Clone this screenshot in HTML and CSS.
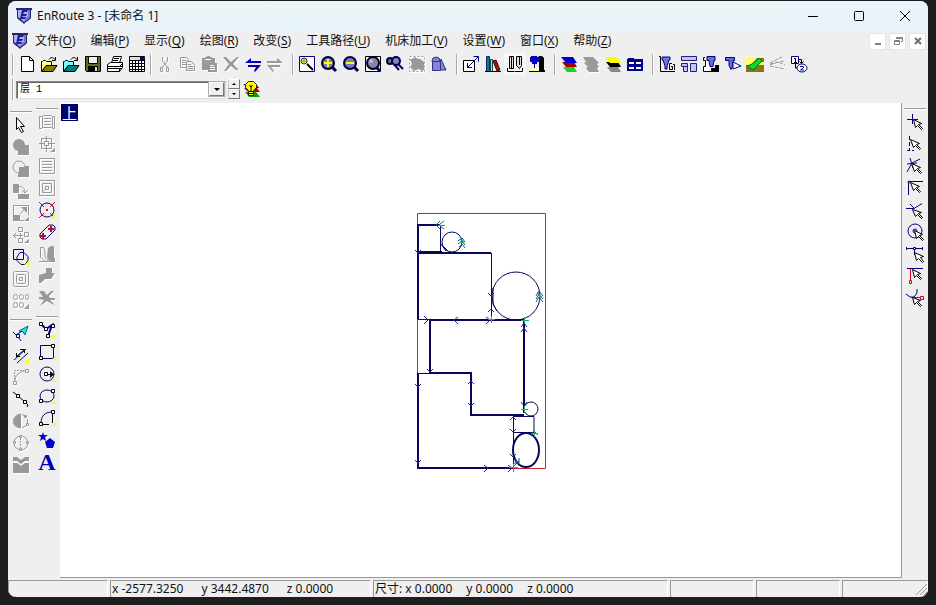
FILE: index.html
```html
<!DOCTYPE html>
<html lang="zh-CN">
<head>
<meta charset="utf-8">
<title>EnRoute 3 - [未命名 1]</title>
<link rel="stylesheet" href="styles.css">
</head>
<body>
<div class="window">
<header class="titlebar">
  <svg class="logo" viewBox="0 0 18 18"><path d="M1 1h16v2h-1v8l-2 2-3 2-2 2-2-2-3-2-2-2V3H1z" fill="#26266c"/><path d="M3 3h11v8l-3 2-2 2-2-2-4-3z" fill="#a9b0fa"/><path d="M13 3h2v7l-3 3-3 2 1-3 3-3z" fill="#7178d8"/><path d="M7 3h6l-1 2H9L8 7h4l-1 2H8l-1 1h4l-1 2H5z" fill="#1c1c98"/></svg>
  <h1>EnRoute 3 - [未命名 1]</h1>
  <div class="wincontrols">
    <button aria-label="最小化"><svg viewBox="0 0 12 12"><path class="k" d="M1 6.500h10"/></svg></button>
    <button aria-label="最大化"><svg viewBox="0 0 12 12"><rect class="k" x="1.500" y="1.500" width="9" height="9" rx="1"/></svg></button>
    <button aria-label="关闭"><svg viewBox="0 0 12 12"><path class="k" d="M1 1l10 10M11 1L1 11"/></svg></button>
  </div>
</header>
<nav class="menubar">
  <svg class="logo" viewBox="0 0 18 18"><path d="M1 1h16v2h-1v8l-2 2-3 2-2 2-2-2-3-2-2-2V3H1z" fill="#26266c"/><path d="M3 3h11v8l-3 2-2 2-2-2-4-3z" fill="#a9b0fa"/><path d="M13 3h2v7l-3 3-3 2 1-3 3-3z" fill="#7178d8"/><path d="M7 3h6l-1 2H9L8 7h4l-1 2H8l-1 1h4l-1 2H5z" fill="#1c1c98"/></svg>
  <div class="menus">
    <button>文件(<u>O</u>)</button><button>编辑(<u>P</u>)</button><button>显示(<u>Q</u>)</button><button>绘图(<u>R</u>)</button><button>改变(<u>S</u>)</button><button>工具路径(<u>U</u>)</button><button>机床加工(<u>V</u>)</button><button>设置(<u>W</u>)</button><button>窗口(<u>X</u>)</button><button>帮助(<u>Z</u>)</button>
  </div>
  <div class="mdi">
    <button aria-label="最小化文档"><svg viewBox="0 0 12 12"><path d="M3 8h6v2H3z" fill="#788490"/></svg></button>
    <button aria-label="还原文档"><svg viewBox="0 0 12 12"><path d="M4.500 4V2.500h6v4H9M4 3.500h6M2.500 5.500h5v4h-5zM2 6.500h6" fill="none" stroke="#788490"/></svg></button>
    <button aria-label="关闭文档"><svg viewBox="0 0 12 12"><path d="M3 3l6 6M9 3L3 9" stroke="#66727e" stroke-width="2"/></svg></button>
  </div>
</nav>
<div class="toolbar">
  <div class="group">
    <button aria-label="新建"><svg viewBox="0 0 18 18"><path class="k" fill="#fff" d="M3.500 1.500h8l4 4v11h-12zM11.500 1.500v4h4"/></svg></button>
    <button aria-label="打开"><svg viewBox="0 0 18 18"><path fill="#ffff8c" stroke="#000" d="M1.500 16.500v-10h1l1-1h2l1 1h5v4h-5z"/><path class="k" d="M9 4.500c2-3 4-2 6 0M15.500 2v3.500H12"/><path fill="#808000" stroke="#000" d="M2 16.500l4-6h11l-4 6z"/></svg></button>
    <button aria-label="导入"><svg viewBox="0 0 18 18"><path fill="#70ffff" stroke="#000" d="M1.500 16.500v-10h1l1-1h2l1 1h5v4h-5z"/><path class="k" d="M9 4.500c2-3 4-2 6 0M15.500 2v3.500H12"/><path fill="#008080" stroke="#000" d="M2 16.500l4-6h11l-4 6z"/></svg></button>
    <button aria-label="保存"><svg viewBox="0 0 18 18"><path fill="#686820" stroke="#000" d="M1.500 1.500h15v15h-14l-1-1z"/><path fill="#eee" stroke="#000" d="M4.500 1.500h9v7h-9z"/><path d="M4 11h10v6H4z"/><path fill="#ddd" d="M11 12h2v4h-2z"/></svg></button>
    <button aria-label="打印"><svg viewBox="0 0 18 18"><path fill="#fff" stroke="#000" d="M5.500 8l2-6.500h8L13.500 8M1.500 9.500l3-2h12v5l-3 4h-12z"/><path class="k" d="M8 3.500h5M7 5.500h5M1.500 11.500h12l3-3M1.500 13.500h12v3M14 11.500h3M14 13.500h2"/><path fill="#ff0" d="M8 12h3v1H8z"/></svg></button>
    <button aria-label="表格"><svg viewBox="0 0 18 18"><path fill="#fff" stroke="#000" d="M1.500 1.500h15v15h-15z"/><path class="k" d="M2 5.500h15M2 8.500h15M2 11.500h15M2 14.500h15M4.500 5v12M7.500 5v12M10.500 5v12M13.500 5v12"/><path fill="#000080" d="M12 2h5v3h-5z"/><path fill="#ddd" d="M2 2h10v3H2z"/></svg></button>
  </div>
  <div class="group near">
    <button disabled aria-label="剪切"><svg viewBox="0 0 18 18"><path class="g" d="M6.500 2v4l5 6M11.500 2v4l-5 6M4.500 12.500h2v4h-2zM10.500 12.500h2v4h-2z"/></svg></button>
    <button disabled aria-label="复制"><svg viewBox="0 0 18 18"><path class="g" d="M2.500 2.500h6l2 2v8h-8zM4 5.500h4M4 7.500h4M4 9.500h4"/><path class="g" fill="#efefef" d="M8.500 6.500h5l3 3v6h-8zM10 9.500h3M10 11.500h5M10 13.500h5"/></svg></button>
    <button disabled aria-label="粘贴"><svg viewBox="0 0 18 18"><path fill="#999" d="M2 3h3V2h2V1h3v1h2v1h3v5h2v9H8v-2H2z"/><path class="w" d="M5 4.500h6M10 10.500h4M10 12.500h5M10 14.500h5"/></svg></button>
    <button disabled aria-label="删除"><svg viewBox="0 0 18 18"><path fill="#999" d="M1 2h3l5 5 6-5h2l-6 7 5 5v1h-2l-5-4-5 5H2l5-7z"/></svg></button>
    <button aria-label="撤销"><svg viewBox="0 0 18 18"><path fill="#0000b8" d="M1 8l6-5v3h10v2zM17 10H4v2h8l-2 4 1 1z"/></svg></button>
    <button disabled aria-label="重做"><svg viewBox="0 0 18 18"><path fill="#999" d="M17 8l-6-5v3H1v2zM1 10h13v2H5l3 4-1 1z"/></svg></button>
  </div>
  <div class="group">
    <button aria-label="窗口缩放"><svg viewBox="0 0 18 18"><path class="n" fill="#fff" d="M1.500 1.500h15v15h-15z"/><circle cx="6" cy="6" r="3" fill="#ff0" stroke="#333"/><path stroke="#888" d="M6 4v4M4 6h4"/><path stroke="#000" stroke-width="2" d="M9 9l6 6"/></svg></button>
    <button aria-label="放大"><svg viewBox="0 0 18 18"><path stroke="#000050" stroke-width="3" d="M11 11l5 5"/><circle cx="8" cy="8" r="6" fill="#777bb8" stroke="#000030" stroke-width="2"/><path stroke="#ff0" stroke-width="2" d="M4 8h8M8 4v8"/></svg></button>
    <button aria-label="缩小"><svg viewBox="0 0 18 18"><path stroke="#000050" stroke-width="3" d="M11 11l5 5"/><circle cx="8" cy="8" r="6" fill="#777bb8" stroke="#000050" stroke-width="2"/><path stroke="#ff0" stroke-width="2" d="M4 8h8"/></svg></button>
    <button aria-label="全部显示"><svg viewBox="0 0 18 18"><path fill="#fff" stroke="#000" d="M1.500 1.500h15v15h-15z"/><path stroke="#000060" stroke-width="3" d="M12 12l4 4"/><circle cx="9" cy="8" r="6" fill="#8588a0" stroke="#000030" stroke-width="2"/><circle cx="7" cy="6" r="2" fill="#bbc"/></svg></button>
    <button aria-label="查找"><svg viewBox="0 0 18 18"><path stroke="#000050" stroke-width="2" d="M7 8l6 7M12 9l5 5"/><circle cx="4" cy="6" r="3" fill="#777" stroke="#000040" stroke-width="2"/><circle cx="10" cy="6" r="4" fill="#8888a8" stroke="#000060" stroke-width="2"/></svg></button>
    <button disabled aria-label="选择缩放"><svg viewBox="0 0 18 18"><path class="w" d="M1.500 1.500h15v15h-15z"/><path fill="#999" d="M2 4h2l3-2 3 2h2l4 3v8l-2 1-3-2-5 2-4-4 2-3z"/><path class="g" stroke-dasharray="2 2" d="M1.500 1.500h15v15h-15z"/></svg></button>
    <button aria-label="图形"><svg viewBox="0 0 18 18"><g fill="#8286ca" stroke="#303090"><path d="M11 4l5 11H7z"/><circle cx="6" cy="6" r="4"/><path d="M2.500 6.500h8v9h-8z"/></g></svg></button>
  </div>
  <div class="group">
    <button aria-label="比例"><svg viewBox="0 0 18 18"><path fill="#fff" stroke="#000" d="M1.500 5.500h11v11h-11z"/><path class="n" d="M5 13l11-11M11.500 1.500h5v5M5.500 8v4.500H10"/></svg></button>
    <button aria-label="刀具库"><svg viewBox="0 0 18 18"><path fill="#286c8b" stroke="#003060" d="M2.500 1.500h3v15h-3z"/><path fill="#a4d6cc" stroke="#175050" d="M6.500 4.500h2v12h-2z"/><path fill="#9a1515" stroke="#500" d="M9 6l3-1 4 10-3 1z"/><path class="k" d="M1 16.500h16"/></svg></button>
    <button class="pressed" aria-label="刀具"><svg viewBox="0 0 18 18"><path fill="#ddd" stroke="#000" d="M3.500 1.500h4v12h-4zM10.500 1.500h5v9l-2 3-3-3z"/><path class="k" d="M1.500 13v3.500h7M9 16.500h7.500V13M5.500 2v11M13.500 2v8"/></svg></button>
    <button aria-label="机床"><svg viewBox="0 0 18 18"><path fill="#ffffae" d="M1 12h14v5H1z"/><path fill="#000" d="M9 3l2-2h3l2 2v12h1v2h-6V6H9z"/><path fill="#0000c0" d="M3 1h6v1h3v5H9v2H7v4H6V9H4V7H2V2h1z"/><path class="k" d="M1 16.500h16"/></svg></button>
  </div>
  <div class="group">
    <button aria-label="图层"><svg viewBox="0 0 18 18"><path fill="#20d020" d="M3 12h11l3 5H7z"/><path fill="#a00000" d="M2 7h12l3 5H6z"/><path fill="#0000d0" d="M1 2h12l4 6H6z"/></svg></button>
    <button disabled aria-label="隐藏图层"><svg viewBox="0 0 18 18"><path fill="#999" d="M1 2h10l4 4 2 2-2 1 2 3-2 1 2 4H7l-3-4 2-1-4-4 2-1z"/></svg></button>
    <button aria-label="当前图层"><svg viewBox="0 0 18 18"><path fill="#888" d="M3 12h11l3 5H7z"/><path d="M2 7h12l3 5H6z"/><path fill="#ff0" d="M1 2h12l4 6H6z"/></svg></button>
    <button aria-label="图层管理"><svg viewBox="0 0 18 18"><path fill="#000090" d="M1 4h1V3h6v1h9v12H1z"/><path stroke="#fff" stroke-width="2" d="M3 8h5M10 8h5M3 13h5M10 13h5"/></svg></button>
  </div>
  <div class="group">
    <button aria-label="输出代码"><svg viewBox="0 0 18 18"><path class="k" d="M1 1.500h1.500v15H17"/><path fill="#7078d0" stroke="#000090" d="M4 2h8v3h-1l-2 6v3H7v-3L5 5H4z"/><path class="k" d="M14 8.500h-2.500v6h3v-3H13M15 9.500h1.500V15"/></svg></button>
    <button aria-label="排版"><svg viewBox="0 0 18 18"><path fill="#c1c4ee" stroke="#202080" d="M1.500 1.500h15v4h-15zM1.500 8.500h6v3h-6zM10.500 8.500h6v8h-6zM3.500 11.500h4v5h-4z"/></svg></button>
    <button aria-label="加工"><svg viewBox="0 0 18 18"><path class="k" fill="#fff" d="M3 2.500H1.500v3h2v6h-2v5H10"/><path fill="#6870d0" stroke="#000080" d="M5 1.500h8v4h-1l-1 6H8l-1-6H5z"/><path d="M9 13h4v-3h4v7H9z"/></svg></button>
    <button aria-label="仿真"><svg viewBox="0 0 18 18"><path fill="#646cd0" stroke="#000080" d="M1.500 2.500h9v3H9v5l-2 4-2-4v-5H1.500z"/><path class="n" fill="#fff" d="M9 7l8 4-8 3z"/></svg></button>
    <button aria-label="材料"><svg viewBox="0 0 18 18"><path fill="#827814" d="M0 3h18v14H0z"/><path fill="#ffff68" d="M0 3h11L5 10H0zM13 7h5v3h-7z"/><path fill="#00dc30" stroke="#067016" d="M1 11l5-2 7-6 3 3-9 9z"/></svg></button>
    <button disabled aria-label="路径"><svg viewBox="0 0 18 18"><path class="g" stroke-dasharray="4 1" d="M2 8L14 2M2 9l15-3M2 10l8-3 7 3M2 11l14 3"/></svg></button>
    <button aria-label="顺序"><svg viewBox="0 0 18 18"><path class="n" fill="#fff" d="M1.500 1.500h7v7h-7z"/><ellipse cx="12" cy="13" rx="5" ry="4" class="n" fill="#fff"/><path class="k" d="M4 3.500h1.500v4M4 7.500h3M9 4.500h2.500v4M5.500 9v4H7M9.500 6.500l2 2 2-2"/><path class="n" d="M10 11.500h3.500v1l-3 2.500H14"/></svg></button>
  </div>
</div>
<div class="layerbar">
  <div class="combo">
    <select aria-label="图层"><option>层 1</option></select>
  </div>
  <div class="spin"><button aria-label="上一层"><i class="up"></i></button><button aria-label="下一层"><i class="down"></i></button></div>
  <button class="tool" aria-label="图层可见"><svg viewBox="0 0 18 18"><path fill="#00a500" d="M3 12h11l4 5H7z"/><path fill="#c00000" d="M2 8h13l3 4H6z"/><path fill="#0000a0" d="M1 4h13l3 4H6z"/><path fill="#ff0" stroke="#222" d="M6.500 1.500h5l3 3v3l-3 3v5h-5v-5l-3-3v-3z"/><path class="k" d="M7 11.500h4M7 13.500h4M9 11V7L7.500 5M9 7l1.500-2"/></svg></button>
</div>
<main class="work">
  <aside class="palettes">
    <div class="palette first">
      <div class="set">
        <button aria-label="选择"><svg viewBox="0 0 18 18"><path class="k" fill="#fff" d="M4.500 1.500l8 9h-4l3 5-2 1-3-5-2 2z"/></svg></button>
        <button disabled aria-label="合并"><svg viewBox="0 0 18 18"><circle cx="7" cy="7" r="6" fill="#999"/><path fill="#999" d="M6 7h11v10H6z"/></svg></button>
        <button disabled aria-label="相减"><svg viewBox="0 0 18 18"><path fill="#999" d="M6 6h11v11H6z"/><circle cx="7" cy="7" r="6" fill="#efefef" stroke="#999"/><path fill="#999" d="M7 7h9v9H7z"/></svg></button>
        <button disabled aria-label="旋转"><svg viewBox="0 0 18 18"><path fill="#999" d="M1 2h6v9H1zM6 12h11v5H6z"/><path class="g" d="M7 4.500c4 0 6 2 6 6M10 8l3 3 3-3"/></svg></button>
        <button disabled aria-label="缩放"><svg viewBox="0 0 18 18"><path class="g" d="M1.500 11V1.500h15v10M8 16.500h4M8 10l6-6"/><path fill="#999" d="M1 11h7v6H1zM9 3h6v6zM17 13v4h-5z"/></svg></button>
        <button disabled aria-label="移动"><svg viewBox="0 0 18 18"><path class="g" d="M6.500 1.500h4v4h-4zM12.500 6.500h4v4h-4zM6.500 12.500h4v4h-4zM1 9.500h10M4 7L1.500 9.500 4 12M8.500 7v5"/><path fill="#999" d="M17 13v4h-5z"/></svg></button>
        <button aria-label="组合"><svg viewBox="0 0 18 18"><path class="n" d="M1.500 1.500h10v10h-10z"/><path class="n" d="M8 4.500h4l4 4v4l-3 4H9l-4-4V9z"/><path fill="#ff0" d="M17 13v4h-5z"/></svg></button>
        <button disabled aria-label="偏移"><svg viewBox="0 0 18 18"><rect class="g" x="1.500" y="1.500" width="15" height="15" rx="2"/><rect class="g" x="4.500" y="4.500" width="9" height="9" rx="1"/><path class="g" d="M7.500 7.500h3v3h-3z"/></svg></button>
        <button disabled aria-label="阵列"><svg viewBox="0 0 18 18"><rect class="g" x="1.500" y="2.500" width="4" height="5" rx="2"/><rect class="g" x="7.500" y="2.500" width="4" height="5" rx="2"/><rect class="g" x="13.500" y="2.500" width="3" height="5" rx="2"/><rect class="g" x="1.500" y="10.500" width="4" height="5" rx="2"/><rect class="g" x="7.500" y="10.500" width="4" height="5" rx="2"/><path fill="#999" d="M17 12v5h-5z"/></svg></button>
      </div>
      <div class="set">
        <button aria-label="点编辑"><svg viewBox="0 0 18 18"><path fill="#18e4e4" stroke="#087070" d="M7 7l9-5-3 9-2-3z"/><path class="n" d="M1 8l3 3 6-4M7 14l2 3M4.500 10.500h3v3h-3z"/></svg></button>
        <button aria-label="测量"><svg viewBox="0 0 18 18"><path class="n" d="M2 14L14 3M5 17L16 7"/><path class="k" d="M4 11l8-7M4.500 7v3.500H8M8 3.500h4.500V7"/><path fill="#ff0" d="M17 12v5h-5z"/></svg></button>
        <button disabled aria-label="倒圆"><svg viewBox="0 0 18 18"><path class="g" d="M1.500 13.500h3v3h-3zM13.500 1.500h3v3h-3zM3 13c0-6 4-9 10-10"/><path class="g" stroke-dasharray="2 1" d="M2.500 12V2.500H12"/></svg></button>
        <button aria-label="节点"><svg viewBox="0 0 18 18"><path class="n" d="M7 7l5 4"/><path class="k" d="M1 2l4 3M14 13l2 2-1 2"/><path class="k" fill="#fff" d="M4.500 4.500h3v3h-3zM11.500 10.500h3v3h-3z"/></svg></button>
        <button disabled aria-label="镜像"><svg viewBox="0 0 18 18"><path class="g" fill="#999" d="M8.500 2v14C-1 15-1 4 8.500 2z"/><path class="g" d="M10 2.500l4 2M10 16l5-3M15.500 7v5M12.500 3.500h2v2h-2zM14.500 11.500h2v2h-2z"/></svg></button>
        <button disabled aria-label="对称"><svg viewBox="0 0 18 18"><circle class="g" cx="9" cy="9" r="7"/><path class="g" d="M8.500 1v16" stroke-dasharray="2 1"/><path class="g" fill="#eee" d="M7.500 1.500h2v2h-2zM1.500 7.500h2v2h-2zM14.500 7.500h2v2h-2zM7.500 14.500h2v2h-2z"/></svg></button>
        <button disabled aria-label="桥接"><svg viewBox="0 0 18 18"><path fill="#999" d="M1 1h4l4 3 4-3h4v4h-4l-4 3-4-3H1zM1 7h4l4 3 4-3h4v10H1z"/></svg></button>
      </div>
    </div>
    <div class="palette">
      <div class="set">
        <button disabled aria-label="变形"><svg viewBox="0 0 18 18"><path class="g" d="M1.500 3.500h3l1-1h8l1 1h2v12h-2l-1-1h-9l-1 1h-2zM4.500 4v11M14.500 4v11M6 5.500h7M6 8.500h7M6 11.500h7"/></svg></button>
        <button disabled aria-label="对齐"><svg viewBox="0 0 18 18"><path class="g" d="M3.500 3.500h10v10h-10zM6.500 6.500h4v4h-4zM8.500 1v5M8.500 11v6M1 8.500h5M11 8.500h6"/><path fill="#999" d="M17 13v4h-5z"/></svg></button>
        <button disabled aria-label="填充"><svg viewBox="0 0 18 18"><path class="g" d="M1.500 1.500h15v15h-15zM4 4.500h10M4 7.500h10M4 10.500h10M4 13.500h10"/></svg></button>
        <button disabled aria-label="岛屿填充"><svg viewBox="0 0 18 18"><path class="g" d="M1.500 1.500h15v15h-15zM4.500 4.500h9v9h-9zM7.500 7.500h3v3h-3zM5 12.500l3-3"/></svg></button>
        <button aria-label="钻孔"><svg viewBox="0 0 18 18"><circle class="n" cx="9" cy="9" r="7"/><path stroke="#e00030" d="M1 1l5 5M17 1l-5 5M1 17l5-5M17 17l-5-5"/><path fill="#f00" d="M8 8h2v2H8z"/><path fill="#ff0" d="M17 13v4h-5z"/></svg></button>
        <button aria-label="槽孔"><svg viewBox="0 0 18 18"><path class="n" d="M2 11l9-9h4l2 2v3L8 16H4l-2-2z"/><path stroke="#d00030" stroke-width="2" d="M2 13h6M5 10v6M10 6h6M13 3v6"/></svg></button>
        <button disabled aria-label="雕刻"><svg viewBox="0 0 18 18"><path class="g" d="M2 2.500h3.500L7 6v6l3 4M2.500 3v9l4 4M1 16.500h16"/><path fill="#999" d="M10 3l3-2h3v12h1v3h-6l-2-4z"/></svg></button>
        <button disabled aria-label="斜面"><svg viewBox="0 0 18 18"><path fill="#999" d="M8 1h6v5h3l-4 6H7l-4 4H1V8l7-2z"/></svg></button>
        <button disabled aria-label="清除"><svg viewBox="0 0 18 18"><path fill="#999" d="M1 2h5l3 4 4-4h3l-5 5 1 2h5v2h-5l5 5-3-1-5-3-7 5 4-6-5-1V8h4z"/></svg></button>
      </div>
      <div class="set">
        <button aria-label="折线"><svg viewBox="0 0 18 18"><path class="n" stroke-width="2" d="M3 3l5 5 6-4-4 11"/><path class="k" fill="#fff" d="M1.500 1.500h3v3h-3zM6.500 6.500h3v3h-3zM13.500 3.500h3v3h-3zM8.500 13.500h3v3h-3z"/><path fill="#ff0" d="M17 13v4h-5z"/></svg></button>
        <button aria-label="矩形"><svg viewBox="0 0 18 18"><path class="n" d="M2.500 2.500h13v13h-13z"/><path class="k" fill="#fff" d="M13.500 1.500h3v3h-3zM1.500 13.500h3v3h-3z"/><path fill="#ff0" d="M18 13v4h-5z"/></svg></button>
        <button aria-label="圆"><svg viewBox="0 0 18 18"><circle class="n" cx="9" cy="9" r="7"/><path class="k" fill="#fff" d="M6.500 7.500h3v3h-3zM10 9.500h3"/><path d="M12 6l4 3.500-4 3.500z"/><path fill="#ff0" d="M18 13v4h-5z"/></svg></button>
        <button aria-label="椭圆"><svg viewBox="0 0 18 18"><ellipse class="n" cx="9" cy="9" rx="7" ry="6"/><path class="k" fill="#fff" d="M13.500 2.500h3v3h-3zM1.500 12.500h3v3h-3z"/><path fill="#ff0" d="M18 13v4h-5z"/></svg></button>
        <button aria-label="圆弧"><svg viewBox="0 0 18 18"><path class="n" d="M3 14C3 7 7 3 14 3"/><path class="k" d="M14.500 5v9M5 15.500h6"/><path class="k" fill="#fff" d="M13.500 1.500h3v3h-3zM1.500 13.500h3v3h-3z"/><path fill="#ff0" d="M18 13v4h-5z"/></svg></button>
        <button aria-label="多边形"><svg viewBox="0 0 18 18"><path fill="#0000d0" d="M5 1l1 3h4L7 6l1 4-3-2-3 2 1-4-3-2h4zM12 7l5 4-2 6H9l-2-6z"/></svg></button>
        <button class="letter" aria-label="文字">A</button>
      </div>
    </div>
  </aside>
  <section class="canvas" aria-label="绘图区">
    <span class="view">上</span>
    <svg class="drawing" viewBox="405 205 150 270">
      <path fill="none" stroke="#c8242e" d="M417.500 213.500h128v255h-128z"/>
      <g fill="none" stroke="#07075d">
        <path stroke-width="2" d="M418 252v-27h22M418 252v67M418 253h73M430 320h94v93M430 320v53h41v42h53M418 373v95h95"/>
        <path d="M440.500 226v25M418 251.500h24M491.500 253v67M418 319.500h107M418 373.500h13M513.500 415v53M513 416.500h21v17M513 432.500h21"/>
        <circle cx="452" cy="242" r="10"/><circle cx="516" cy="296" r="24"/><circle cx="531" cy="409" r="7"/><ellipse cx="526" cy="450" rx="13" ry="17" stroke-width="2"/>
        <path d="M441 244l5 7M443 246l5 5M493 288v16l4 7"/>
      </g>
      <path fill="none" stroke="#202090" d="M415 250l3 3 3-3M424 316l4 4-4 4M458 317l-4 3 4 4M488 293l3 3 3-3M488 312l3-3 3 3M427 369l3 3 3-3M415 384l3 3 3-3M468 384l3-3 3 3M468 403l3 3 3-3M415 460l3 3 3-3M484 465l4 3-4 4M510 420l3-3 3 3M510 429l3 3 3-3M510 454l3 3 3-3M508 465l4 3-4 4M486 317l4 3-4 4M521 327l3-4 3 4M521 332l3-4 3 4M521 402l3 4 3-4"/>
      <path fill="none" stroke="#0a6680" d="M444 221l-5 4 5 4M440 221l-4 4 4 4M458 241l4-3 3 4M458 244l4-3 3 4M459 247l3-3 3 4M536 296l3-5 4 5M536 299l3-5 4 5M536 302l3-5 4 5M531 435l3-4 4 4M514 459l4 4M513 463h6v-5M514 466l5-5"/>
      <path stroke="#22ad75" d="M438 225.500h7M459 239l6 3M488 319.500h7M491.500 316v7M521 320.500h8M524.500 317v6M521 409.500h7M524.500 406v7M531 433.500h7M534.500 430v7M509 467.500h9M513.500 464v8M537 292l5 5"/>
    </svg>
  </section>
  <aside class="snaps">
    <div class="set">
      <button aria-label="交点捕捉"><svg viewBox="0 0 18 18"><path class="n" d="M1 6.500h11M6.500 1v10"/><path class="k" fill="#fff" d="M7.500 6.500l8 4-3 1 4 4-1 1-4-4-2 2z"/></svg></button>
      <button aria-label="端点捕捉"><svg viewBox="0 0 18 18"><path class="n" stroke-dasharray="4 2" d="M3.500 1v15"/><path class="n" d="M1 15.500h2M6 15.500h2"/><path class="k" fill="#fff" d="M4.500 4.500l9 4-3 1 4 4-1 1-4-4-2 2z"/></svg></button>
      <button aria-label="相交捕捉"><svg viewBox="0 0 18 18"><path class="n" d="M4 1l3 10M1 15L6 6l8-4M1 7l10-1"/><path class="k" fill="#fff" d="M5.500 6.500l9 4-3 1 4 4-1 1-4-4-2 2z"/></svg></button>
      <button aria-label="角点捕捉"><svg viewBox="0 0 18 18"><path class="n" d="M2.500 16V2.500H17"/><circle class="n" cx="3" cy="3" r="1" fill="#fff"/><path class="k" fill="#fff" d="M4.500 3.500l9 4-3 1 4 4-1 1-4-4-2 2z"/></svg></button>
      <button aria-label="切点捕捉"><svg viewBox="0 0 18 18"><path class="n" d="M0 7.500h8l8-5M4 3l4 4"/><path class="k" fill="#fff" d="M6.500 8.500l9 3-3 1 4 4-1 1-4-4-2 2z"/></svg></button>
      <button aria-label="圆心捕捉"><svg viewBox="0 0 18 18"><circle class="n" cx="9" cy="8" r="7"/><circle class="n" cx="9" cy="8" r="2"/><path class="k" fill="#fff" d="M8.500 7.500l8 4-3 1 4 4-1 1-4-4-2 2z"/></svg></button>
      <button aria-label="中点捕捉"><svg viewBox="0 0 18 18"><path class="n" d="M0 3.500h17M.5 2v3M16.500 2v3M8.500 3v7"/><path class="k" fill="#fff" d="M8.500 7.500l9 4-3 1 3 4-1 1-4-4-2 2zM7.500 2.500h2v2h-2z"/></svg></button>
      <button aria-label="垂足捕捉"><svg viewBox="0 0 18 18"><path class="n" d="M1 1.500h16"/><path stroke="#d00020" fill="none" d="M4.500 2v11M3.500 13.500h2v3h-2z"/><path class="k" fill="#fff" d="M6.500 2.500l8 4-3 1 4 4-1 1-4-4-2 2z"/></svg></button>
      <button aria-label="最近点捕捉"><svg viewBox="0 0 18 18"><path class="n" d="M0 5l4 3h4l3-4V0"/><path stroke="#d00020" fill="none" d="M5 8.500h9M14.500 7.500h3v3h-3z"/><path class="k" fill="#fff" d="M6.500 8.500l8 3-3 1 4 4-1 1-4-4-2 2z"/></svg></button>
    </div>
  </aside>
</main>
<footer class="status">
  <div></div>
  <div class="position"><span>x -2577.3250</span><span>y 3442.4870</span><span>z 0.0000</span></div>
  <div class="size"><span>尺寸: x 0.0000</span><span>y 0.0000</span><span>z 0.0000</span></div>
  <div></div><div></div>
  <div class="last"><svg viewBox="0 0 12 12"><path stroke="#999" d="M1 12L12 1M5 12l7-7M9 12l3-3"/></svg></div>
</footer>
</div>
</body>
</html>
```

FILE: styles.css
```css
*, *::before, *::after { box-sizing: border-box; }
body {
  margin: 0;
  height: 100vh;
  padding: 1px 8px 8px;
  background: #1e1e1e;
  color: #111;
  font: 12px/16px "Noto Sans", "Noto Sans CJK SC", sans-serif;
}
button {
  padding: 0;
  border: 0;
  background: none;
  font: inherit;
  color: inherit;
}
svg { display: block; }
.k { stroke: #000; }
.n { stroke: #000080; }
.g { stroke: #999; }
.w { stroke: #fff; }
.k:not([fill]), .n:not([fill]), .g:not([fill]), .w { fill: none; }

.window {
  display: flex;
  flex-direction: column;
  height: 100%;
  overflow: hidden;
  border-radius: 8px;
  background: #efefef;
}
.titlebar {
  display: flex;
  flex: none;
  align-items: center;
  height: 30px;
  padding-left: 7px;
  background: linear-gradient(90deg, #edf2f9, #e9f4f8 30%, #e9f3f9);
}
.logo { width: 18px; height: 18px; }
h1 {
  flex: 1;
  margin: 0 0 0 4px;
  font-size: 12px;
  font-weight: 400;
}
.wincontrols { display: flex; height: 100%; }
.wincontrols button { display: grid; place-items: center; width: 46px; }
.wincontrols svg { width: 12px; height: 12px; }

.menubar {
  display: flex;
  flex: none;
  align-items: center;
  height: 20px;
  margin-bottom: 1px;
  padding: 0 2px 0 3px;
}
.menus { display: flex; flex: 1; gap: 15px; margin-left: 6px; }
.menus button { white-space: nowrap; }
u { text-underline-offset: 2px; }
.mdi { display: flex; gap: 3px; }
.mdi button {
  display: grid;
  place-items: center;
  width: 17px;
  height: 17px;
  background: #fff;
  border: 1px solid #e4e4e4;
}
.mdi svg { width: 12px; height: 12px; }

.toolbar { display: flex; flex: none; height: 24px; padding-left: 4px; }
.group { display: flex; align-items: center; }
.group + .group { margin-left: 6px; }
.group + .near { margin-left: 2px; }
.group::before, .layerbar::before {
  content: "";
  width: 2px;
  height: 21px;
  margin-right: 2px;
  border-left: 1px solid #aaa;
  border-right: 1px solid #fff;
}
.group button, .set button, .tool {
  display: grid;
  place-items: center;
  width: 22px;
  height: 22px;
}
.group svg, .set svg, .tool svg { width: 18px; height: 18px; }
button:disabled svg { filter: drop-shadow(1px 1px 0 #fff); }
.group .pressed { background: #f7f7f7; }

.layerbar {
  display: flex;
  flex: none;
  align-items: center;
  height: 26px;
  padding-left: 4px;
}
.combo { position: relative; width: 210px; height: 18px; }
.combo select {
  appearance: none;
  width: 100%;
  height: 100%;
  padding: 0 20px 0 3px;
  border: 1px solid #888;
  border-right-color: #ddd;
  border-bottom-color: #ddd;
  border-radius: 0;
  box-shadow: inset 1px 1px #666;
  background: #fff;
  color: #000;
  font: 10px/14px "Liberation Mono", "Noto Sans CJK SC", monospace;
}
.combo::before {
  content: "";
  position: absolute;
  inset: 2px 2px 2px auto;
  width: 15px;
  border: 1px solid;
  border-color: #fff #777 #777 #fff;
  box-shadow: 0 0 0 1px #aaa;
  background: #efefef;
  pointer-events: none;
}
.combo::after {
  content: "";
  position: absolute;
  top: 8px;
  right: 6px;
  border: 3px solid transparent;
  border-top-color: #000;
  border-bottom: 0;
  pointer-events: none;
}
.spin { display: grid; width: 12px; height: 20px; margin-left: 2px; }
.spin button {
  display: grid;
  place-items: center;
  border: 1px solid;
  border-color: #fff #777 #777 #ccc;
}
.spin i { border: 2px solid transparent; }
.spin .up { border-bottom-color: #000; border-top: 0; }
.spin .down { border-top-color: #000; border-bottom: 0; }

.work { display: flex; flex: 1; min-height: 0; }
.palettes { display: flex; flex: none; gap: 4px; width: 52px; padding: 6px 0 0 2px; }
.palette { width: 22px; }
.palette.first { padding-top: 3px; }
.set::before {
  content: "";
  display: block;
  height: 2px;
  margin-bottom: 1px;
  border-top: 1px solid #999;
  border-bottom: 1px solid #fff;
}
.set + .set { margin-top: 7px; }
.set .letter {
  color: #0000b0;
  font: bold 24px/22px "Liberation Serif", serif;
}
.canvas {
  position: relative;
  flex: 1;
  overflow: hidden;
  margin-top: 1px;
  border-right: 1px solid #999;
  border-bottom: 1px solid #999;
  background: #fff;
}
.view {
  position: absolute;
  top: 1px;
  left: 1px;
  padding: 0 1px;
  background: #00006c;
  color: #fff;
  font: 15px/17px "Noto Sans CJK SC", sans-serif;
}
.drawing {
  position: absolute;
  top: 102px;
  left: 345px;
  width: 150px;
  height: 270px;
}
.snaps { flex: none; width: 26px; padding: 6px 2px 0; }

.status {
  display: grid;
  flex: none;
  grid-template-columns: 100px 261px 295px 84px 84px 1fr;
  gap: 2px;
  height: 17px;
  margin-top: 2px;
}
.status div {
  display: flex;
  align-items: center;
  padding-left: 1px;
  border: 1px solid;
  border-color: #999 #fff #fff #999;
  white-space: pre;
}
.status .position { gap: 18px; }
.status .size { gap: 14px; }
.status .last { justify-content: flex-end; }
.status svg { width: 12px; height: 12px; }
```
